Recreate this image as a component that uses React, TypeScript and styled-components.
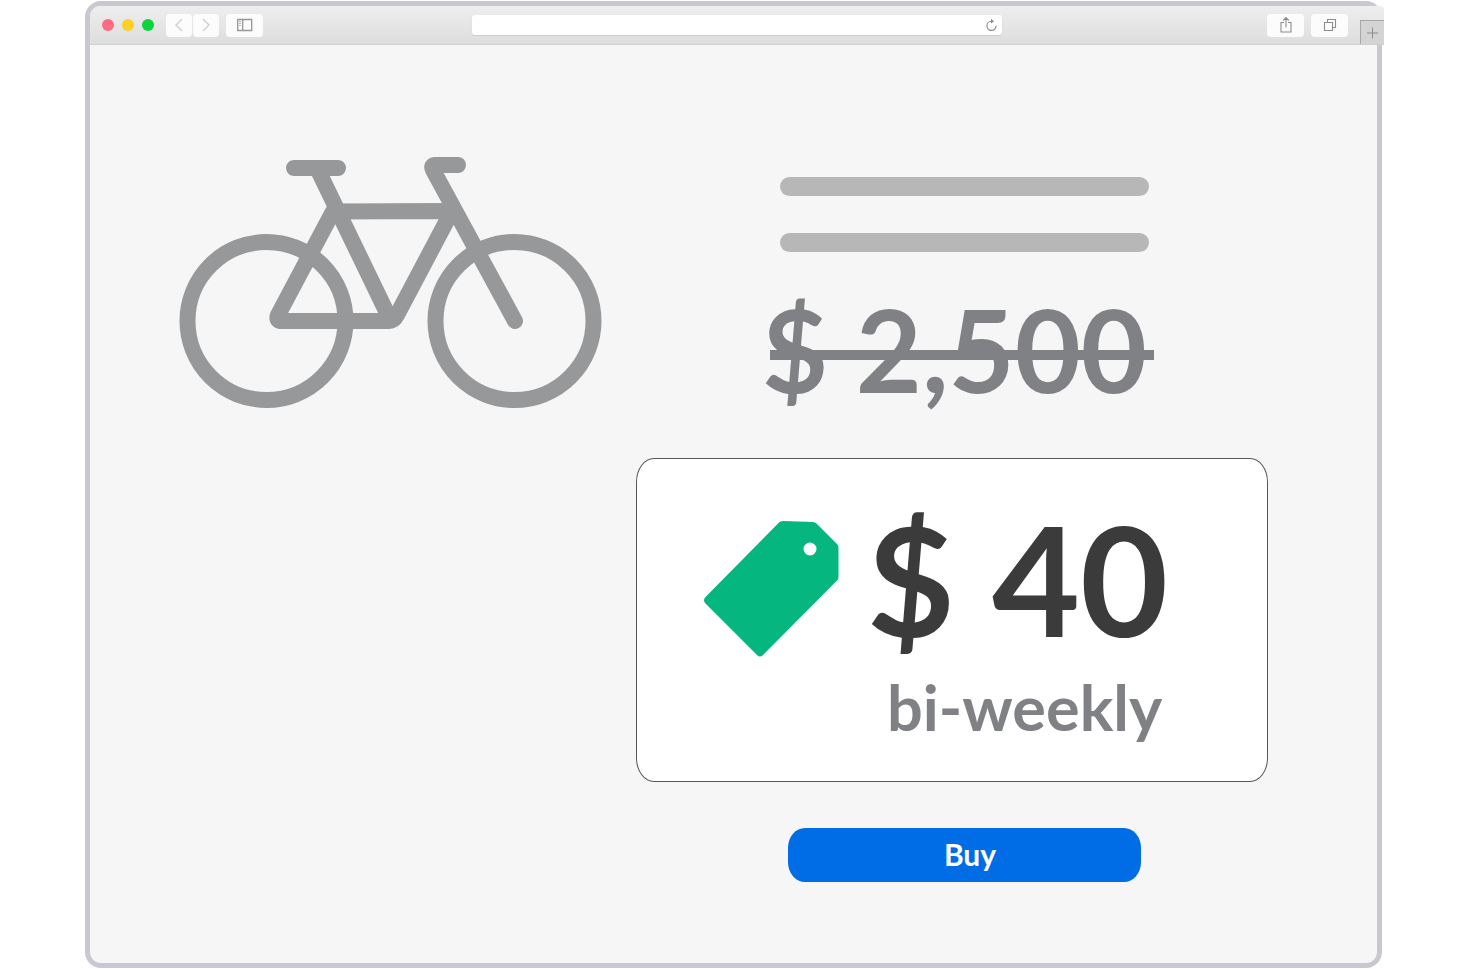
import React from "react";
import styled, { createGlobalStyle } from "styled-components";

const GlobalStyle = createGlobalStyle`
  *, *::before, *::after { box-sizing: border-box; }
  body {
    margin: 0;
    background: #ffffff;
    font-family: Lato, "Liberation Sans", sans-serif;
  }
  button, input { font: inherit; }
`;

const Stage = styled.div`
  display: flex;
  min-height: 100vh;
  padding: 1px 84px 1px 85px;
`;

const BrowserWindow = styled.div`
  flex: 1;
  display: flex;
  flex-direction: column;
  min-width: 0;
  border: 5px solid #c8c8d2;
  border-radius: 16px;
  background: #f6f6f6;
`;

const Toolbar = styled.header`
  display: grid;
  grid-template-columns: 1fr 41% 1fr;
  height: 39px;
  margin-right: -7px;
  background: linear-gradient(#eeeeee, #dddddd);
  border-bottom: 1px solid #d0d0d0;
  border-radius: 10px 4px 0 0;
`;

const ToolGroup = styled.div<{ $end?: boolean }>`
  display: flex;
  align-items: center;
  justify-content: ${(p) => (p.$end ? "flex-end" : "flex-start")};
  padding-left: ${(p) => (p.$end ? 0 : 12)}px;
`;

const Lights = styled.div`
  display: flex;
  gap: 8px;
  margin-right: 12px;
`;

const Light = styled.span<{ $color: string }>`
  width: 12px;
  height: 12px;
  border-radius: 50%;
  background: ${(p) => p.$color};
`;

const ToolButton = styled.button<{ $wide?: boolean; $gap?: number }>`
  display: flex;
  align-items: center;
  justify-content: center;
  width: ${(p) => (p.$wide ? 37 : 26)}px;
  height: 23px;
  margin: 0 ${(p) => p.$gap ?? 0}px 0 0;
  padding: 0;
  border: 0;
  border-radius: 4px;
  background: #fcfcfc;
`;

const NewTab = styled.button`
  display: flex;
  align-items: center;
  justify-content: center;
  align-self: flex-end;
  width: 24px;
  height: 24px;
  padding: 0;
  border: 0;
  border-top: 1px solid #a8a8a8;
  border-left: 1px solid #a8a8a8;
  background: #d4d4d4;
`;

const AddressBar = styled.div`
  display: flex;
  align-items: center;
  align-self: center;
  height: 20px;
  padding-right: 4px;
  border-radius: 3px;
  background: #ffffff;
  box-shadow: 0 1px 1px #cccccc;
`;

const AddressInput = styled.input`
  flex: 1;
  min-width: 0;
  height: 20px;
  border: 0;
  outline: 0;
  background: transparent;
  font-size: 12px;
`;

const Reload = styled.button`
  display: flex;
  padding: 0;
  border: 0;
  background: transparent;
`;

const Product = styled.main`
  display: flex;
  justify-content: space-between;
  align-items: flex-start;
  gap: 32px;
  padding: 112px 109px 80px 90px;
`;

const Bicycle = styled.svg`
  flex: 0 1 422px;
  min-width: 0;
  overflow: visible;
`;

const Offer = styled.section`
  display: flex;
  flex-direction: column;
  flex: 0 1 632px;
  min-width: 0;
  padding-top: 20px;
`;

const Summary = styled.div`
  display: flex;
  flex-direction: column;
  align-items: center;
  padding-left: 24px;
`;

const TextLine = styled.div`
  width: 369px;
  max-width: 100%;
  height: 19px;
  margin-bottom: 37px;
  border-radius: 10px;
  background: #b7b7b7;
`;

const OldPrice = styled.del`
  position: relative;
  width: 404px;
  color: #808184;
  font-size: 114px;
  font-weight: 700;
  line-height: 120px;
  text-decoration: none;
  white-space: nowrap;

  &::after {
    content: "";
    position: absolute;
    top: 61px;
    left: 8px;
    right: 12px;
    height: 10px;
    background: #808184;
  }
`;

const PlanCard = styled.article`
  display: flex;
  justify-content: center;
  align-items: flex-start;
  gap: 28px;
  height: 324px;
  margin: 49px 0 46px;
  padding: 42px 32px 0 0;
  border: 1px solid #58585a;
  border-radius: 18px / 24px;
  background: #ffffff;
`;

const TagIcon = styled.svg`
  flex: none;
  margin-top: 20px;
`;

const Plan = styled.div`
  display: flex;
  flex-direction: column;
  align-items: flex-end;
`;

const PlanPrice = styled.strong`
  color: #3b3b3b;
  font-size: 152px;
  font-weight: 700;
  line-height: 154px;
  white-space: nowrap;
`;

const Period = styled.span`
  margin-top: 16px;
  padding-right: 6px;
  color: #808184;
  font-size: 63px;
  font-weight: 700;
  line-height: 72px;
  white-space: nowrap;
`;

const BuyButton = styled.button`
  width: 353px;
  max-width: 100%;
  height: 54px;
  padding: 0 0 2px 12px;
  border: 0;
  border-radius: 17px / 20px;
  background: #006ce5;
  color: #ffffff;
  font-size: 30px;
  font-weight: 700;
  line-height: 36px;
`;

export default function App() {
  return (
    <>
      <GlobalStyle />
      <Stage>
        <BrowserWindow>
          <Toolbar>
            <ToolGroup>
              <Lights>
                <Light $color="#ff6a80" />
                <Light $color="#ffcf24" />
                <Light $color="#0cd43c" />
              </Lights>
              <ToolButton $gap={1} aria-label="Back">
                <svg width="10" height="14" fill="none" stroke="#cfcfcf" strokeWidth="1.4">
                  <path d="M8 1 2 7l6 6" />
                </svg>
              </ToolButton>
              <ToolButton $gap={7} aria-label="Forward">
                <svg width="10" height="14" fill="none" stroke="#cfcfcf" strokeWidth="1.4">
                  <path d="m2 1 6 6-6 6" />
                </svg>
              </ToolButton>
              <ToolButton $wide aria-label="Sidebar">
                <svg width="16" height="14" fill="none" stroke="#969696">
                  <path d="M.7 1.500h14v11H.7zM5.700 1.500v11" strokeWidth="1.300" />
                  <path d="M2 3.500h2M2 5.500h2M2 7.500h2" stroke="#b5b5b5" />
                </svg>
              </ToolButton>
            </ToolGroup>
            <AddressBar>
              <AddressInput aria-label="Address" />
              <Reload aria-label="Reload">
                <svg width="13" height="14" fill="none" stroke="#858585" strokeWidth="1.1">
                  <path d="M6.5 3.2a4.6 4.6 0 1 0 4.6 4.6" />
                  <path d="m6 1 3 2.2-3 2.2z" fill="#858585" stroke="none" />
                </svg>
              </Reload>
            </AddressBar>
            <ToolGroup $end>
              <ToolButton $wide $gap={7} aria-label="Share">
                <svg width="14" height="18" fill="none" stroke="#8c8c8c" strokeWidth="1.1">
                  <path d="M5 6.5H2v9.500h10v-9.500H9M7 11.500V1.5M4.2 4.5 7 1.5l2.8 3" />
                </svg>
              </ToolButton>
              <ToolButton $wide $gap={12} aria-label="Show tabs">
                <svg width="14" height="14" fill="none" stroke="#8c8c8c" strokeWidth="1.1">
                  <path d="M1.5 4.5h8v8h-8zM4.5 4.5v-3h8v8h-3" />
                </svg>
              </ToolButton>
              <NewTab aria-label="New tab">
                <svg width="12" height="12" stroke="#8c8c8c">
                  <path d="M5.500 .5v11M0 6h11" />
                </svg>
              </NewTab>
            </ToolGroup>
          </Toolbar>
          <Product>
            <Bicycle viewBox="0 0 422 252" role="img" aria-label="Bicycle">
              <g fill="none" stroke="#97989a" strokeWidth="16" strokeLinecap="round" strokeLinejoin="round">
                <circle cx="86.5" cy="164" r="79" />
                <circle cx="334.5" cy="164" r="79" />
                <path d="M114 11h44M137 11 208 158" />
                <path d="M278 8h-24q-3 1-1 5L335 164" />
                <path d="M153 54.5 272 54 217 158q-3 6-8 6H100q-4-1-2-6z" />
              </g>
            </Bicycle>
            <Offer>
              <Summary>
                <TextLine />
                <TextLine />
                <OldPrice>$ 2,500</OldPrice>
              </Summary>
              <PlanCard>
                <TagIcon width="135" height="136" viewBox="0 0 135 136" aria-hidden="true">
                  <path
                    fill="#05b77e"
                    fillRule="evenodd"
                    d="M75 1.500Q76.500 0 79 0l30 1q2 0 3.500 1.500L133 23q1.500 1.500 1.500 4v29q0 2-1.500 3.500L59 134q-3 3-6 0L1.500 82.500q-3-3.500 0-6.500zM106 21.500a6.500 6.500 0 1 0 0 13 6.500 6.500 0 0 0 0-13z"
                  />
                </TagIcon>
                <Plan>
                  <PlanPrice>$ 40</PlanPrice>
                  <Period>bi-weekly</Period>
                </Plan>
              </PlanCard>
              <Summary>
                <BuyButton>Buy</BuyButton>
              </Summary>
            </Offer>
          </Product>
        </BrowserWindow>
      </Stage>
    </>
  );
}
